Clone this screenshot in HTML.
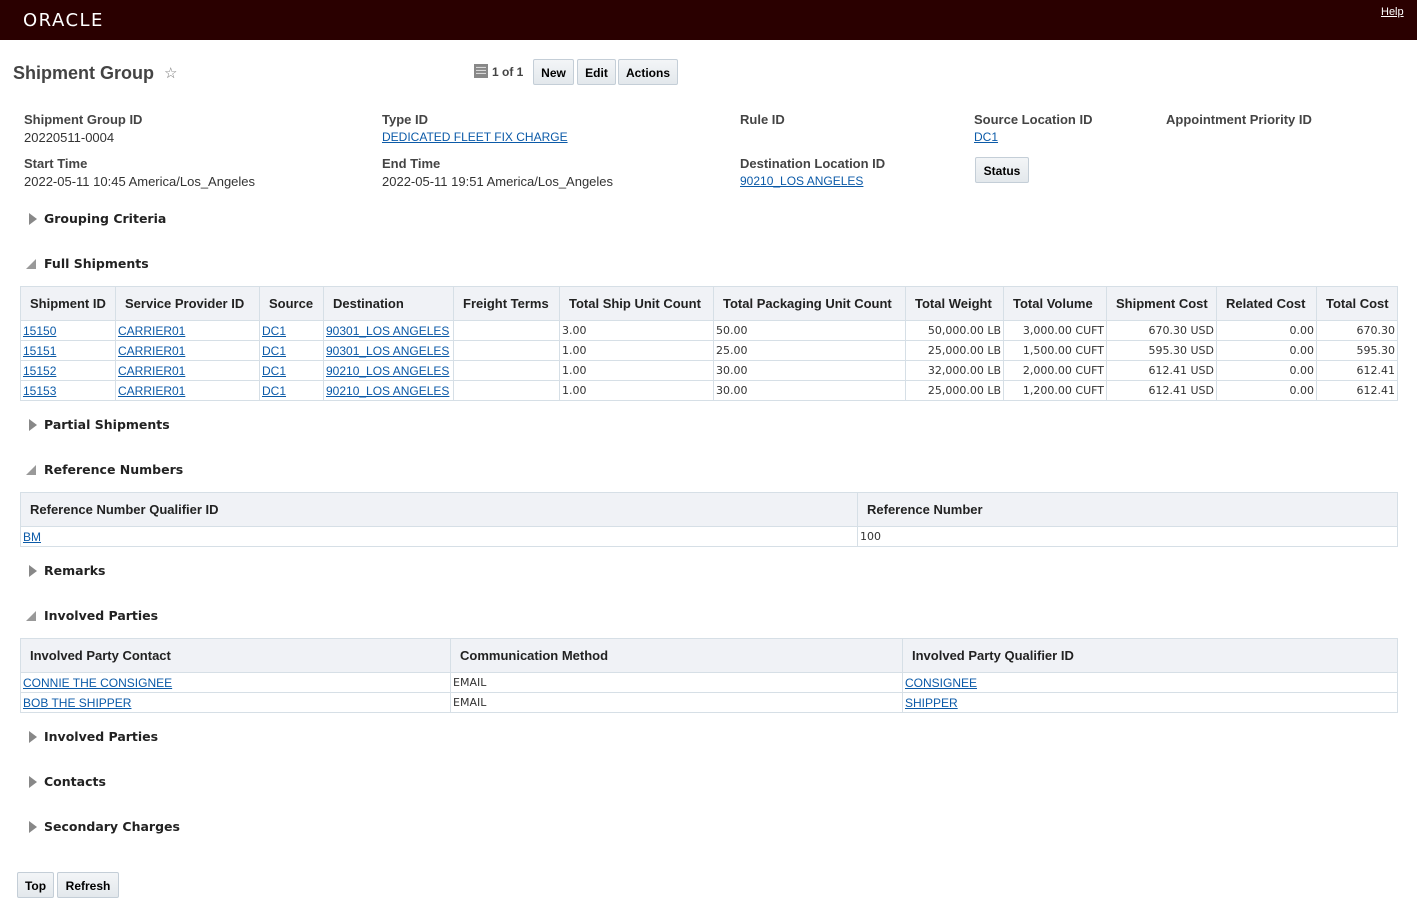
<!DOCTYPE html>
<html><head><meta charset="utf-8"><style>
body{margin:0;width:1417px;height:918px;position:relative;background:#fff;font-family:"Liberation Sans",Arial,sans-serif;color:#333;overflow:hidden}
.a{position:absolute;white-space:nowrap}
a{color:#0b5aa8;text-decoration:underline}
.hdr{position:absolute;left:0;top:0;width:1417px;height:40px;background:#2a0000}
.lbl{font-size:13px;font-weight:bold;color:#444}
.val{font-size:12px;color:#333}
.btn{position:absolute;height:24px;border:1px solid #c4ced7;background:linear-gradient(#f3f5f7,#e3e8ec);border-radius:2px;font-size:12px;font-weight:bold;color:#000;line-height:24px;text-align:center;box-sizing:border-box}
.sec{font-family:"DejaVu Sans",sans-serif;font-size:12.5px;font-weight:bold;color:#222}
.tri{position:absolute;width:0;height:0;border-top:6px solid transparent;border-bottom:6px solid transparent;border-left:8px solid #888}
.dtri{position:absolute;width:0;height:0;border-left:10px solid transparent;border-bottom:10px solid #999}
table{position:absolute;border-collapse:collapse;table-layout:fixed}
td,th{border:1px solid #d6dfe6;padding:0 2px;overflow:hidden;white-space:nowrap}
th{background:#f0f2f6;font-size:13px;font-weight:bold;color:#222;text-align:left;padding:0 9px;height:33px}
td{font-family:"DejaVu Sans",sans-serif;font-size:11px;height:19px;color:#333}
td a{font-family:"Liberation Sans",Arial,sans-serif;font-size:12px}
.r{text-align:right}
</style></head><body>
<div class="hdr"></div>
<div class="a" style="left:23px;top:10px;color:#fff;font-size:18px;letter-spacing:1.5px;font-family:'DejaVu Sans',sans-serif">ORACLE</div>
<div class="a" style="left:1381px;top:6px;font-size:11px"><a style="color:#fff">Help</a></div>

<div class="a" style="left:13px;top:63px;font-size:18px;font-weight:bold;color:#444">Shipment Group</div>
<div class="a" style="left:164px;top:64px;font-size:15px;color:#777">☆</div>
<div class="a" style="left:474px;top:64px;width:14px;height:14px;background:#888"></div>
<div class="a" style="left:476px;top:66px;color:#fff;font-size:10px;line-height:3px">―<br>―<br>―</div>
<div class="a" style="left:492px;top:65px;font-size:12px;font-weight:bold;color:#444">1 of 1</div>
<div class="btn" style="left:533px;top:59px;width:41px;height:26px;line-height:26px">New</div>
<div class="btn" style="left:577px;top:59px;width:39px;height:26px;line-height:26px">Edit</div>
<div class="btn" style="left:618px;top:59px;width:60px;height:26px;line-height:26px">Actions</div>

<div class="a lbl" style="left:24px;top:112px">Shipment Group ID</div>
<div class="a val" style="left:24px;top:130px;font-size:13px">20220511-0004</div>
<div class="a lbl" style="left:24px;top:156px">Start Time</div>
<div class="a val" style="left:24px;top:174px;font-size:13px">2022-05-11 10:45 America/Los_Angeles</div>
<div class="a lbl" style="left:382px;top:112px">Type ID</div>
<div class="a val" style="left:382px;top:130px"><a>DEDICATED FLEET FIX CHARGE</a></div>
<div class="a lbl" style="left:382px;top:156px">End Time</div>
<div class="a val" style="left:382px;top:174px;font-size:13px">2022-05-11 19:51 America/Los_Angeles</div>
<div class="a lbl" style="left:740px;top:112px">Rule ID</div>
<div class="a lbl" style="left:740px;top:156px">Destination Location ID</div>
<div class="a val" style="left:740px;top:174px"><a>90210_LOS ANGELES</a></div>
<div class="a lbl" style="left:974px;top:112px">Source Location ID</div>
<div class="a val" style="left:974px;top:130px"><a>DC1</a></div>
<div class="btn" style="left:975px;top:157px;width:54px;height:26px;line-height:26px">Status</div>
<div class="a lbl" style="left:1166px;top:112px">Appointment Priority ID</div>

<div class="tri" style="left:29px;top:213px"></div><div class="a sec" style="left:44px;top:211px">Grouping Criteria</div>
<div class="dtri" style="left:26px;top:259px"></div><div class="a sec" style="left:44px;top:256px">Full Shipments</div>

<table style="left:20px;top:286px;width:1377px">
<colgroup><col style="width:95px"><col style="width:144px"><col style="width:64px"><col style="width:130px"><col style="width:106px"><col style="width:154px"><col style="width:192px"><col style="width:98px"><col style="width:103px"><col style="width:110px"><col style="width:100px"><col style="width:81px"></colgroup>
<tr><th>Shipment ID</th><th>Service Provider ID</th><th>Source</th><th>Destination</th><th>Freight Terms</th><th>Total Ship Unit Count</th><th>Total Packaging Unit Count</th><th>Total Weight</th><th>Total Volume</th><th>Shipment Cost</th><th>Related Cost</th><th>Total Cost</th></tr>
<tr><td><a>15150</a></td><td><a>CARRIER01</a></td><td><a>DC1</a></td><td><a>90301_LOS ANGELES</a></td><td></td><td>3.00</td><td>50.00</td><td class="r">50,000.00 LB</td><td class="r">3,000.00 CUFT</td><td class="r">670.30 USD</td><td class="r">0.00</td><td class="r">670.30</td></tr>
<tr><td><a>15151</a></td><td><a>CARRIER01</a></td><td><a>DC1</a></td><td><a>90301_LOS ANGELES</a></td><td></td><td>1.00</td><td>25.00</td><td class="r">25,000.00 LB</td><td class="r">1,500.00 CUFT</td><td class="r">595.30 USD</td><td class="r">0.00</td><td class="r">595.30</td></tr>
<tr><td><a>15152</a></td><td><a>CARRIER01</a></td><td><a>DC1</a></td><td><a>90210_LOS ANGELES</a></td><td></td><td>1.00</td><td>30.00</td><td class="r">32,000.00 LB</td><td class="r">2,000.00 CUFT</td><td class="r">612.41 USD</td><td class="r">0.00</td><td class="r">612.41</td></tr>
<tr><td><a>15153</a></td><td><a>CARRIER01</a></td><td><a>DC1</a></td><td><a>90210_LOS ANGELES</a></td><td></td><td>1.00</td><td>30.00</td><td class="r">25,000.00 LB</td><td class="r">1,200.00 CUFT</td><td class="r">612.41 USD</td><td class="r">0.00</td><td class="r">612.41</td></tr>
</table>

<div class="tri" style="left:29px;top:419px"></div><div class="a sec" style="left:44px;top:417px">Partial Shipments</div>
<div class="dtri" style="left:26px;top:465px"></div><div class="a sec" style="left:44px;top:462px">Reference Numbers</div>

<table style="left:20px;top:492px;width:1377px">
<colgroup><col style="width:837px"><col style="width:540px"></colgroup>
<tr><th>Reference Number Qualifier ID</th><th>Reference Number</th></tr>
<tr><td><a>BM</a></td><td>100</td></tr>
</table>

<div class="tri" style="left:29px;top:565px"></div><div class="a sec" style="left:44px;top:563px">Remarks</div>
<div class="dtri" style="left:26px;top:611px"></div><div class="a sec" style="left:44px;top:608px">Involved Parties</div>

<table style="left:20px;top:638px;width:1377px">
<colgroup><col style="width:430px"><col style="width:452px"><col style="width:495px"></colgroup>
<tr><th>Involved Party Contact</th><th>Communication Method</th><th>Involved Party Qualifier ID</th></tr>
<tr><td><a>CONNIE THE CONSIGNEE</a></td><td>EMAIL</td><td><a>CONSIGNEE</a></td></tr>
<tr><td><a>BOB THE SHIPPER</a></td><td>EMAIL</td><td><a>SHIPPER</a></td></tr>
</table>

<div class="tri" style="left:29px;top:731px"></div><div class="a sec" style="left:44px;top:729px">Involved Parties</div>
<div class="tri" style="left:29px;top:776px"></div><div class="a sec" style="left:44px;top:774px">Contacts</div>
<div class="tri" style="left:29px;top:821px"></div><div class="a sec" style="left:44px;top:819px">Secondary Charges</div>

<div class="btn" style="left:17px;top:872px;width:37px;height:26px;line-height:26px">Top</div>
<div class="btn" style="left:57px;top:872px;width:62px;height:26px;line-height:26px">Refresh</div>
</body></html>
